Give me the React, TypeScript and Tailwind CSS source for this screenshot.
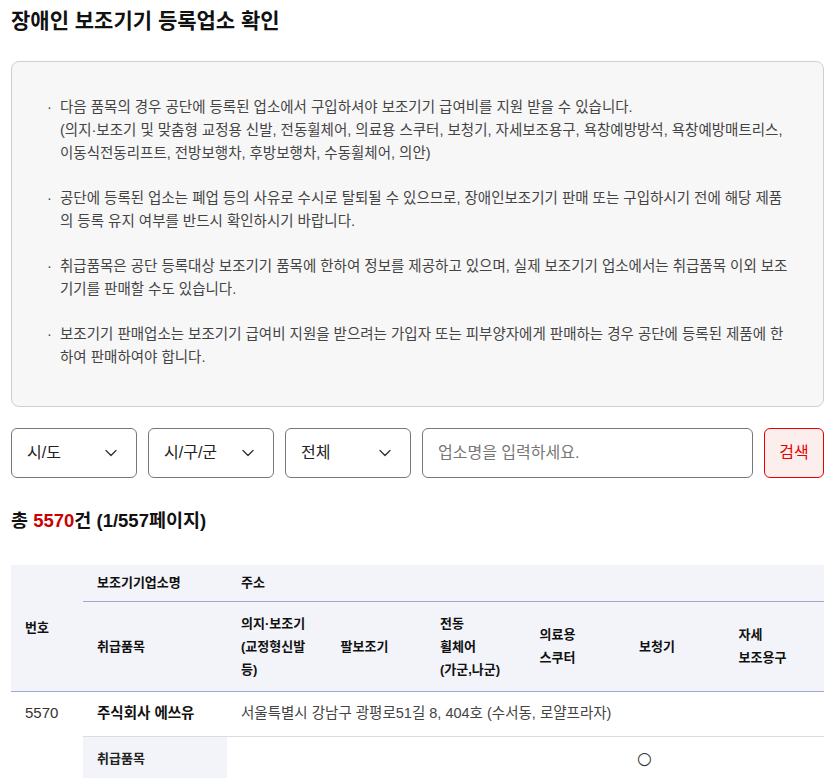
import React from "react";
import { ChevronDown } from "lucide-react";

const font = { fontFamily: '"Liberation Sans", "Noto Sans CJK KR", sans-serif' };

function Select({ label }: { label: string }) {
  return (
    <div className="flex h-[50px] w-[126px] shrink-0 items-center justify-between rounded-[6px] border border-[#777] bg-white pl-[15px] pr-[15px]">
      <span className="text-[16px] text-[#222]">{label}</span>
      <ChevronDown size={20} strokeWidth={1.6} className="text-[#333]" />
    </div>
  );
}

const bullets: string[][] = [
  [
    "다음 품목의 경우 공단에 등록된 업소에서 구입하셔야 보조기기 급여비를 지원 받을 수 있습니다.",
    "(의지·보조기 및 맞춤형 교정용 신발, 전동휠체어, 의료용 스쿠터, 보청기, 자세보조용구, 욕창예방방석, 욕창예방매트리스,",
    "이동식전동리프트, 전방보행차, 후방보행차, 수동휠체어, 의안)",
  ],
  [
    "공단에 등록된 업소는 폐업 등의 사유로 수시로 탈퇴될 수 있으므로, 장애인보조기기 판매 또는 구입하시기 전에 해당 제품",
    "의 등록 유지 여부를 반드시 확인하시기 바랍니다.",
  ],
  [
    "취급품목은 공단 등록대상 보조기기 품목에 한하여 정보를 제공하고 있으며, 실제 보조기기 업소에서는 취급품목 이외 보조",
    "기기를 판매할 수도 있습니다.",
  ],
  [
    "보조기기 판매업소는 보조기기 급여비 지원을 받으려는 가입자 또는 피부양자에게 판매하는 경우 공단에 등록된 제품에 한",
    "하여 판매하여야 합니다.",
  ],
];

export default function App() {
  return (
    <div style={font} className="min-h-[778px] bg-white pl-[11px] pr-[8px] text-[#222]">
      <h1 className="pt-[5px] text-[21px] font-bold leading-[32px] text-[#111]">장애인 보조기기 등록업소 확인</h1>

      <div className="mt-[24px] rounded-[8px] border border-[#cfcfcf] bg-[#f7f7f7] pb-[37px] pl-[35px] pr-[30px] pt-[34px]">
        <ul className="flex flex-col gap-[22px]">
          {bullets.map((lines, i) => (
            <li key={i} className="flex text-[14.5px] leading-[23px] text-[#444]">
              <span className="w-[13px] shrink-0">·</span>
              <span className="whitespace-nowrap">
                {lines.map((l, j) => (
                  <React.Fragment key={j}>
                    {j > 0 && <br />}
                    {l}
                  </React.Fragment>
                ))}
              </span>
            </li>
          ))}
        </ul>
      </div>

      <div className="mt-[21px] flex gap-[11px]">
        <Select label="시/도" />
        <Select label="시/구/군" />
        <Select label="전체" />
        <div className="flex h-[50px] flex-1 items-center rounded-[6px] border border-[#777] bg-white px-[15px]">
          <span className="text-[16px] text-[#777]">업소명을 입력하세요.</span>
        </div>
        <button className="h-[50px] w-[60px] shrink-0 rounded-[6px] border border-[#e60000] bg-[#fdeeee] text-[16px] text-[#e60000]">
          검색
        </button>
      </div>

      <div className="mt-[30px] text-[18.5px] font-bold leading-[26px] text-[#111]">
        총 <span className="text-[#cc0000]">5570</span>건 (1/557페이지)
      </div>

      <table className="mt-[31px] w-full table-fixed border-collapse text-left">
        <colgroup>
          <col className="w-[72px]" />
          <col className="w-[144px]" />
          <col />
          <col />
          <col />
          <col />
          <col />
          <col />
        </colgroup>
        <thead className="bg-[#f3f4f9] text-[13px] font-bold text-[#111]">
          <tr className="h-[36px]">
            <th rowSpan={2} className="border-b border-[#a3a8c6] px-[14px] align-middle">번호</th>
            <th className="border-b border-[#a3a8c6] px-[14px]">보조기기업소명</th>
            <th colSpan={6} className="border-b border-[#a3a8c6] px-[14px]">주소</th>
          </tr>
          <tr className="h-[90px] leading-[23px]">
            <th className="border-b border-[#a3a8c6] px-[14px]">취급품목</th>
            <th className="border-b border-[#a3a8c6] px-[14px]">의지·보조기<br />(교정형신발<br />등)</th>
            <th className="border-b border-[#a3a8c6] px-[14px]">팔보조기</th>
            <th className="border-b border-[#a3a8c6] px-[14px]">전동<br />휠체어<br />(가군,나군)</th>
            <th className="border-b border-[#a3a8c6] px-[14px]">의료용<br />스쿠터</th>
            <th className="border-b border-[#a3a8c6] px-[14px]">보청기</th>
            <th className="border-b border-[#a3a8c6] px-[14px]">자세<br />보조용구</th>
          </tr>
        </thead>
        <tbody>
          <tr className="h-[45px]">
            <td rowSpan={2} className="px-[14px] align-top pt-[10px] text-[15px] text-[#333]">5570</td>
            <td className="border-b border-[#dcdcdc] px-[14px] text-[14.5px] font-bold text-[#111]">주식회사 에쓰유</td>
            <td colSpan={6} className="border-b border-[#dcdcdc] px-[14px] text-[14.5px] text-[#444]">
              서울특별시 강남구 광평로51길 8, 404호 (수서동, 로얄프라자)
            </td>
          </tr>
          <tr className="h-[44px]">
            <td className="bg-[#f3f4f9] px-[14px] text-[13px] font-bold text-[#222]">취급품목</td>
            <td className="px-[14px]"></td>
            <td className="px-[14px]"></td>
            <td className="px-[14px]"></td>
            <td className="px-[14px]"></td>
            <td className="pl-[12px] pr-[14px] text-[17px] text-[#333]" style={{ fontFamily: '"DejaVu Sans", sans-serif' }}>○</td>
            <td className="px-[14px]"></td>
          </tr>
        </tbody>
      </table>
    </div>
  );
}
